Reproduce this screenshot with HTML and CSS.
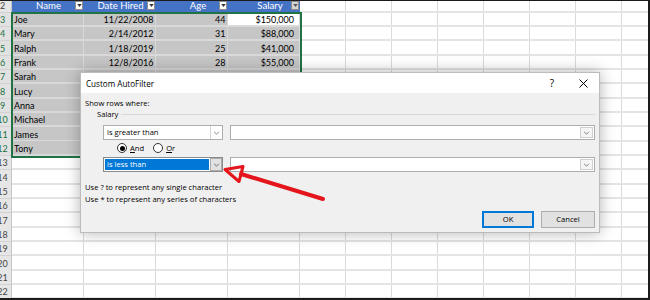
FILE: index.html
```html
<!DOCTYPE html>
<html lang="en">
<head>
    <meta charset="UTF-8">
    <title>Custom AutoFilter</title>
    <link rel="stylesheet" href="styles.css">
</head>
<body>
<div class="screen">
    <div class="sheet">
        <div class="row hdr">
            <div class="rh">2</div>
            <div class="th"><span class="t">Name</span><span class="dd"><svg viewBox="0 0 6 4"><polygon points="0,0 6,0 3,4" fill="#333"/></svg></span></div>
            <div class="th"><span class="t">Date Hired</span><span class="dd"><svg viewBox="0 0 6 4"><polygon points="0,0 6,0 3,4" fill="#333"/></svg></span></div>
            <div class="th num"><span class="t">Age</span><span class="dd"><svg viewBox="0 0 6 4"><polygon points="0,0 6,0 3,4" fill="#333"/></svg></span></div>
            <div class="th num"><span class="t">Salary</span><span class="dd on"><svg viewBox="0 0 6 4"><polygon points="0,0 6,0 3,4" fill="#555"/></svg></span></div>
            <div class="fill"></div>
        </div>
        <div class="row sel"><div class="rh">3</div><div class="c">Joe</div><div class="c r">11/22/2008</div><div class="c r">44</div><div class="c r sal act">$150,000</div><div class="fill"></div></div>
        <div class="row sel"><div class="rh">4</div><div class="c">Mary</div><div class="c r">2/14/2012</div><div class="c r">31</div><div class="c r sal">$88,000</div><div class="fill"></div></div>
        <div class="row sel"><div class="rh">5</div><div class="c">Ralph</div><div class="c r">1/18/2019</div><div class="c r">25</div><div class="c r sal">$41,000</div><div class="fill"></div></div>
        <div class="row sel"><div class="rh">6</div><div class="c">Frank</div><div class="c r">12/8/2016</div><div class="c r">28</div><div class="c r sal">$55,000</div><div class="fill"></div></div>
        <div class="row sel"><div class="rh">7</div><div class="c">Sarah</div><div class="c"></div><div class="c"></div><div class="c"></div><div class="fill"></div></div>
        <div class="row sel"><div class="rh">8</div><div class="c">Lucy</div><div class="c"></div><div class="c"></div><div class="c"></div><div class="fill"></div></div>
        <div class="row sel"><div class="rh">9</div><div class="c">Anna</div><div class="c"></div><div class="c"></div><div class="c"></div><div class="fill"></div></div>
        <div class="row sel"><div class="rh">10</div><div class="c">Michael</div><div class="c"></div><div class="c"></div><div class="c"></div><div class="fill"></div></div>
        <div class="row sel"><div class="rh">11</div><div class="c">James</div><div class="c"></div><div class="c"></div><div class="c"></div><div class="fill"></div></div>
        <div class="row sel"><div class="rh">12</div><div class="c">Tony</div><div class="c"></div><div class="c"></div><div class="c"></div><div class="fill"></div></div>
        <div class="row"><div class="rh">13</div><div class="c"></div><div class="c"></div><div class="c"></div><div class="c"></div><div class="fill"></div></div>
        <div class="row"><div class="rh">14</div><div class="c"></div><div class="c"></div><div class="c"></div><div class="c"></div><div class="fill"></div></div>
        <div class="row"><div class="rh">15</div><div class="c"></div><div class="c"></div><div class="c"></div><div class="c"></div><div class="fill"></div></div>
        <div class="row"><div class="rh">16</div><div class="c"></div><div class="c"></div><div class="c"></div><div class="c"></div><div class="fill"></div></div>
        <div class="row"><div class="rh">17</div><div class="c"></div><div class="c"></div><div class="c"></div><div class="c"></div><div class="fill"></div></div>
        <div class="row"><div class="rh">18</div><div class="c"></div><div class="c"></div><div class="c"></div><div class="c"></div><div class="fill"></div></div>
        <div class="row"><div class="rh">19</div><div class="c"></div><div class="c"></div><div class="c"></div><div class="c"></div><div class="fill"></div></div>
        <div class="row"><div class="rh">20</div><div class="c"></div><div class="c"></div><div class="c"></div><div class="c"></div><div class="fill"></div></div>
        <div class="row"><div class="rh">21</div><div class="c"></div><div class="c"></div><div class="c"></div><div class="c"></div><div class="fill"></div></div>
        <div class="row"><div class="rh">22</div><div class="c"></div><div class="c"></div><div class="c"></div><div class="c"></div><div class="fill"></div></div>
    </div>

    <!-- selected range outline -->
    <div class="selbox"></div>

    <div class="dialog">
        <div class="dlg-title">
            <span class="dlg-name">Custom AutoFilter</span>
            <span class="help">?</span>
            <svg class="close" viewBox="0 0 9 9"><path d="M0.5 0.5 L8.5 8.5 M8.5 0.5 L0.5 8.5" stroke="#000" stroke-width="1"/></svg>
        </div>
        <div class="dlg-body">
            <div class="show">Show rows where:</div>
            <div class="group"><span>Salary</span><span class="rule"></span></div>
            <div class="crit">
                <div class="combo">
                    <span class="val">is greater than</span>
                    <span class="btn"><svg viewBox="0 0 8 5"><path d="M1 1 L4 4 L7 1" fill="none" stroke="#555" stroke-width="0.9"/></svg></span>
                </div>
                <div class="field">
                    <span class="btn"><svg viewBox="0 0 8 5"><path d="M1 1 L4 4 L7 1" fill="none" stroke="#555" stroke-width="0.9"/></svg></span>
                </div>
            </div>
            <div class="logic">
                <span class="radio on"></span><span class="lbl"><u>A</u>nd</span>
                <span class="radio"></span><span class="lbl"><u>O</u>r</span>
            </div>
            <div class="crit">
                <div class="combo focus">
                    <span class="val">is less than</span>
                    <span class="btn"><svg viewBox="0 0 8 5"><path d="M1 1 L4 4 L7 1" fill="none" stroke="#444" stroke-width="0.9"/></svg></span>
                </div>
                <div class="field">
                    <span class="btn"><svg viewBox="0 0 8 5"><path d="M1 1 L4 4 L7 1" fill="none" stroke="#555" stroke-width="0.9"/></svg></span>
                </div>
            </div>
            <div class="note first">Use ? to represent any single character</div>
            <div class="note">Use * to represent any series of characters</div>
            <div class="actions">
                <button class="ok">OK</button>
                <button class="cancel">Cancel</button>
            </div>
        </div>
    </div>

    <svg class="arrow" viewBox="0 0 648 300">
        <line x1="241" y1="174" x2="323" y2="199" stroke="#e5161b" stroke-width="4" stroke-linecap="round"/>
        <polygon points="225,169.5 243,166.5 239,181.5" fill="none" stroke="#e5161b" stroke-width="3" stroke-linejoin="round"/>
    </svg>
</div>
</body>
</html>
```

FILE: styles.css
```css
* {box-sizing: border-box;}

body {
    margin: 0;
    background: #fff;
    font-family: Lato, 'Liberation Sans', sans-serif;
}

.screen {
    position: relative;
    width: 650px;
    height: 300px;
    overflow: hidden;
    border-top: 1px solid #1b1b1b;
    border-right: 2px solid #1b1b1b;
    border-bottom: 2px solid #1b1b1b;
}

/* spreadsheet */
.sheet {
    margin: -2.8px 0 0 -6px;
    font-size: 9px;
    color: #000;
}

.row {
    display: grid;
    grid-template-columns: 18px repeat(4, 72px) 1fr;
    height: 14.33px;
}

.rh {
    background: #e6e6e6;
    border-right: 1px solid #c6c6c6;
    border-bottom: 1px solid #d2d2d2;
    text-align: center;
    color: #444;
    padding-top: 1.5px;
    line-height: 12px;
}

.sel .rh {
    color: #217346;
    background: #e1e1e1;
}

.c {
    border-right: 1px solid #dadada;
    border-bottom: 2px solid #e4e4e4;
    padding: 1.5px 1.5px 0 2px;
    line-height: 12px;
    white-space: nowrap;
    overflow: hidden;
}

.sel .c {
    background: #c6c6c6;
    border-color: #d9d9d9;
}

.sel .c.act {background: #fff;}

.r {text-align: right;}

.c.sal {padding-right: 5px;}

.fill {
    border-bottom: 2px solid #e4e4e4;
    background: repeating-linear-gradient(to right, transparent 0 45px, #dadada 45px 46px);
}

.th {
    background: #4472c4;
    color: #fff;
    display: flex;
    align-items: center;
    padding: 1px 1px 0 10px;
    font-size: 9.6px;
}

.th.num {padding-left: 21px;}

.th .t {
    flex: 1;
    text-align: center;
}

.dd {
    width: 8px;
    height: 9px;
    background: #fff;
    border: 1px solid #8c8c8c;
    display: flex;
    align-items: center;
    justify-content: center;
}

.dd svg {width: 5px; height: 3px;}

.dd.on {background: #d4d4d4;}

.selbox {
    position: absolute;
    left: 11px;
    top: 11px;
    width: 291px;
    height: 146px;
    border: 2px solid #217346;
}

/* dialog */
.dialog {
    position: absolute;
    left: 80px;
    top: 71px;
    width: 520px;
    height: 161px;
    background: #f0f0f0;
    border: 1px solid #bcbcbc;
    box-shadow: 0 0 14px rgba(0, 0, 0, 0.3);
    font-family: 'Open Sans', 'Noto Sans', sans-serif;
    font-size: 7.6px;
    color: #000;
}

.dlg-title {
    height: 20px;
    background: #fff;
    display: flex;
    align-items: center;
    padding: 0 11px 0 5px;
}

.dlg-name {
    flex: 1;
    font-size: 8.1px;
}

.help {
    font-size: 10px;
    margin-right: 25px;
}

.close {
    display: block;
    flex: none;
    width: 9px;
    height: 9px;
}

.dlg-body {padding: 0 4px;}

.show {
    margin-top: 5px;
    line-height: 11px;
}

.group {
    display: flex;
    align-items: center;
    margin-left: 12px;
    line-height: 11px;
}

.rule {
    flex: 1;
    height: 1px;
    background: #d9d9d9;
    margin-left: 3px;
}

.crit {
    display: flex;
    gap: 7px;
    height: 15px;
    margin: 5px 0 0 18px;
}

.crit + .logic {margin-top: 2px;}
.logic + .crit {margin-top: 3px;}

.combo {
    width: 120px;
    display: flex;
    background: #fff;
    border: 1px solid #adadad;
}

.combo .val {
    flex: 1;
    padding-left: 3px;
    line-height: 13px;
    white-space: nowrap;
}

.btn {
    width: 12px;
    display: flex;
    align-items: center;
    justify-content: center;
    border-left: 1px solid #d4d4d4;
}

.btn svg {width: 7px; height: 4px;}

.combo.focus {
    border-color: #8a8a8a;
    padding: 1px 0 1px 1px;
}

.combo.focus .val {
    background: #0078d7;
    color: #fff;
    line-height: 11px;
    padding-left: 2px;
    margin-right: 1px;
}

.combo.focus .btn {
    margin: -1px 0;
    background: #e1e1e1;
    border: 1px solid #adadad;
}

.field {
    flex: 1;
    display: flex;
    justify-content: flex-end;
    background: #fff;
    border: 1px solid #adadad;
}

.field .btn {
    background: #f5f5f5;
    border: 1px solid #cfcfcf;
    width: 13px;
    margin: 1px;
}

.logic {
    display: flex;
    align-items: center;
    height: 12px;
    margin-left: 32px;
}

.radio {
    width: 10px;
    height: 10px;
    border: 1px solid #333;
    border-radius: 50%;
    background: #fff;
    display: flex;
    align-items: center;
    justify-content: center;
}

.radio.on::after {
    content: "";
    width: 5px;
    height: 5px;
    border-radius: 50%;
    background: #000;
}

.lbl {margin: 0 9px 0 3px;}

.note {line-height: 12.3px;}

.note.first {margin-top: 9px;}

.actions {
    display: flex;
    justify-content: flex-end;
    gap: 7px;
    margin-top: 5.5px;
}

.actions button {
    height: 16.5px;
    background: #e1e1e1;
    border: 1px solid #adadad;
    font-family: inherit;
    font-size: 7.6px;
    padding: 0;
    color: #000;
}

.actions .ok {
    width: 52px;
    border: 2px solid #0078d7;
}

.actions .cancel {width: 54px;}

.arrow {
    position: absolute;
    left: 0;
    top: -1px;
    width: 648px;
    height: 300px;
}
```
